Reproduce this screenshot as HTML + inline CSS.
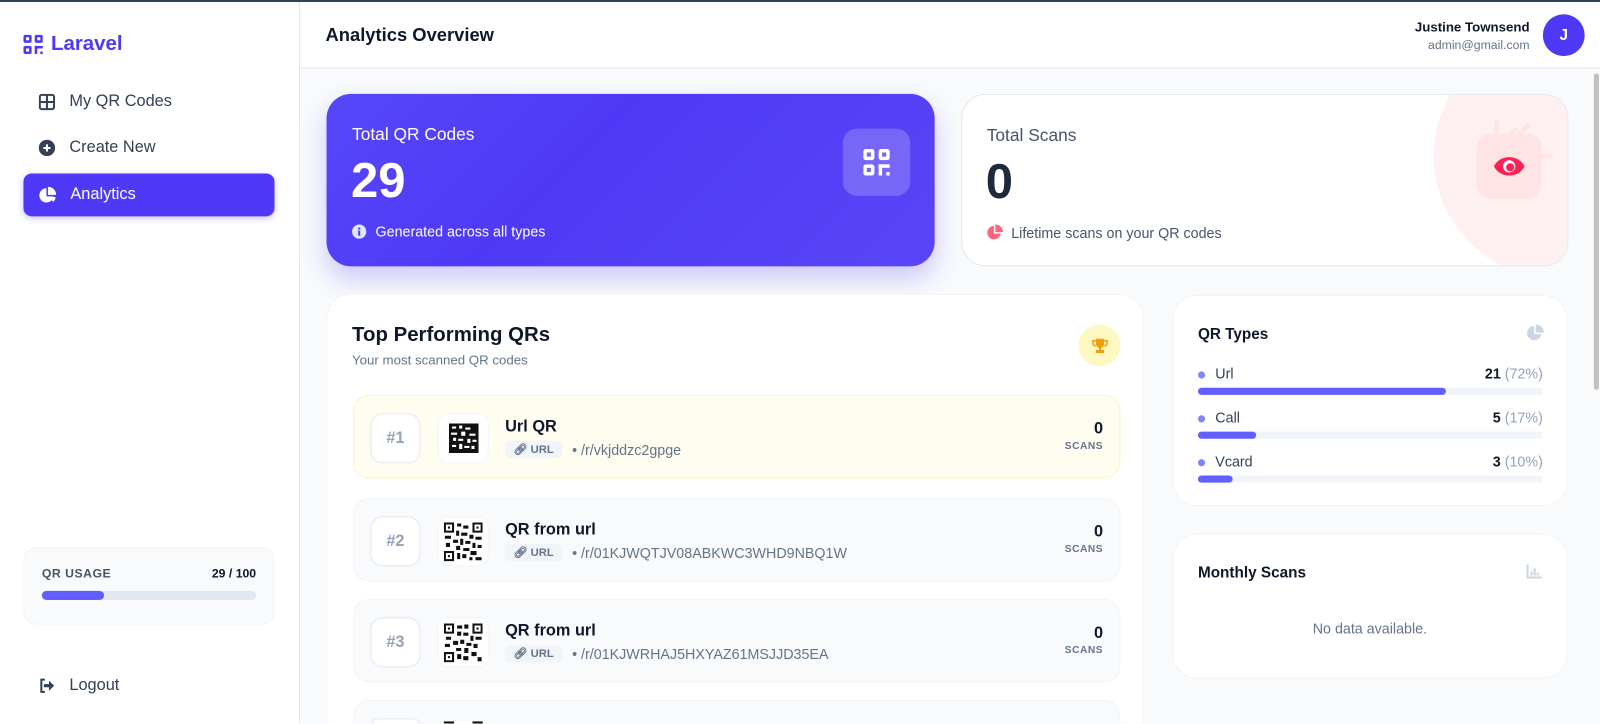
<!DOCTYPE html>
<html style="width:1600px;height:724px;overflow:hidden"><head><meta charset="utf-8"><style>
*{box-sizing:border-box;margin:0;padding:0}
body{width:1600px;height:724px;overflow:hidden;font-family:"Liberation Sans",sans-serif;background:#f8fafc;color:#0f172a;position:relative}
#w{position:absolute;left:0;top:0;width:1568px;height:709px;overflow:hidden;transform:scale(1.020408);transform-origin:0 0;background:#f8fafc}
.top{position:absolute;left:0;top:0;width:1568px;height:2px;background:#334155}
.side{position:absolute;left:0;top:2px;width:294px;height:707px;background:#fff;border-right:1px solid #e2e8f0}
.logo{position:absolute;left:23px;top:30px;font-size:20px;font-weight:bold;color:#4f39f6;display:flex;align-items:center;gap:8px}
.nav{position:absolute;left:23px;width:246px;height:42px;border-radius:8px;display:flex;align-items:center;padding-left:15px;gap:14px;font-size:16px;color:#334155}
.nav.act{background:#4f39f6;color:#fff;box-shadow:0 2px 6px rgba(79,57,246,.3)}
.usage{position:absolute;left:23px;top:534px;width:246px;height:76px;background:#f8fafc;border:1px solid #f1f5f9;border-radius:12px;padding:18px 17px}
.hdr{position:absolute;left:294px;top:2px;width:1274px;height:65px;background:#fff;border-bottom:1px solid #e2e8f0}
.card{position:absolute;background:#fff;border:1px solid #e2e8f0;border-radius:24px;overflow:hidden}
.row{position:absolute;left:25px;width:752px;height:82px;border-radius:16px;background:#f8fafc;border:1px solid #f1f5f9;overflow:hidden}
.rank{position:absolute;left:16px;top:17px;width:49px;height:49px;border:1px solid #e2e8f0;background:#fff;border-radius:12px;display:flex;align-items:center;justify-content:center;font-weight:bold;color:#94a3b8;font-size:16px}
.qr{position:absolute;left:82px;top:17px;width:50px;height:49px;background:#fff;border-radius:10px;border:1px solid #f1f5f9;display:flex;align-items:center;justify-content:center}
.ttl{position:absolute;left:148px;top:22px;font-weight:bold;font-size:16px}
.meta{position:absolute;left:148px;top:44px;display:flex;align-items:center;gap:10px;font-size:14px;color:#64748b}
.tag{background:#f1f5f9;border-radius:5px;padding:2px 8px;font-size:11px;font-weight:bold;color:#64748b;display:flex;gap:6px;align-items:center}
.sc{position:absolute;right:16px;top:24px;text-align:right;font-weight:bold;font-size:16px}
.sc small{display:block;font-size:10px;color:#64748b;letter-spacing:.5px;margin-top:2px}
.ty{position:absolute;left:24px;width:338px}
.ty .l{display:flex;justify-content:space-between;font-size:14px;color:#334155}
.ty .bar{height:7px;background:#f1f5f9;border-radius:4px;margin-top:6px}
.ty .bar div{height:7px;background:#615fff;border-radius:4px}
.dot{display:inline-block;width:7px;height:7px;border-radius:50%;background:#7c86ff;margin-right:10px;vertical-align:middle}
</style></head><body><div id="w">
<div class="top"></div>
<div class="side">
<div class="logo"><svg width="19" height="19" viewBox="0 0 19 19" fill="#4f39f6"><path d="M0 2a2 2 0 0 1 2-2h4a2 2 0 0 1 2 2v4a2 2 0 0 1-2 2H2a2 2 0 0 1-2-2zM2.5 2.5v3h3v-3zM11 2a2 2 0 0 1 2-2h4a2 2 0 0 1 2 2v4a2 2 0 0 1-2 2h-4a2 2 0 0 1-2-2zM13.5 2.5v3h3v-3zM0 13a2 2 0 0 1 2-2h4a2 2 0 0 1 2 2v4a2 2 0 0 1-2 2H2a2 2 0 0 1-2-2zM2.5 13.5v3h3v-3z" fill-rule="evenodd"/><rect x="11" y="11" width="2.5" height="8"/><rect x="11" y="11" width="8" height="2.5"/><rect x="16.5" y="16.5" width="2.5" height="2.5"/></svg>Laravel</div>
<div class="nav" style="top:77px"><svg width="16" height="16" viewBox="0 0 16 16"><rect x="1" y="1" width="14" height="14" rx="2" fill="none" stroke="#334155" stroke-width="2"/><path d="M8 1v14M1 8h14" stroke="#334155" stroke-width="2"/></svg>My QR Codes</div>
<div class="nav" style="top:122px"><svg width="16" height="16" viewBox="0 0 16 16"><circle cx="8" cy="8" r="8" fill="#334155"/><path d="M8 4.5v7M4.5 8h7" stroke="#fff" stroke-width="2"/></svg>Create New</div>
<div class="nav act" style="top:168px"><svg width="17" height="17" viewBox="0 0 17 17" fill="#fff"><path d="M7.5 1.5A7 7 0 1 0 14.5 9.5H7.5z"/><path d="M9 0a8 8 0 0 1 8 8H9z"/><path d="M10 10h6.5a7 7 0 0 1-2.3 4.8z"/></svg>Analytics</div>
<div class="usage"><div style="display:flex;justify-content:space-between;font-size:12px;font-weight:bold"><span style="color:#475569;letter-spacing:.5px">QR USAGE</span><span>29 / 100</span></div>
<div style="height:9px;background:#e2e8f0;border-radius:5px;margin-top:10px"><div style="width:29%;height:9px;background:#615fff;border-radius:5px"></div></div></div>
<div class="nav" style="top:649px"><svg width="16" height="16" viewBox="0 0 16 16"><path d="M6 2H2.5v12H6" fill="none" stroke="#334155" stroke-width="2"/><path d="M5 6.5h5V3l5 5-5 5V9.5H5z" fill="#334155"/></svg>Logout</div>
</div>
<div class="hdr">
<div style="position:absolute;left:25px;top:22px;font-size:18px;font-weight:bold;color:#0f172a">Analytics Overview</div>
<div style="position:absolute;right:69px;top:17px;text-align:right"><div style="font-size:13px;font-weight:bold">Justine Townsend</div><div style="font-size:12px;color:#64748b;margin-top:3px">admin@gmail.com</div></div>
<div style="position:absolute;left:1218px;top:12px;width:41px;height:41px;border-radius:50%;background:#4f39f6;color:#fff;font-weight:bold;display:flex;align-items:center;justify-content:center;font-size:15px">J</div>
</div>
<div style="position:absolute;left:1562px;top:72px;width:5px;height:310px;background:#c1c1c1;border-radius:3px"></div>
<div class="card" style="left:320px;top:92px;width:596px;height:169px;border:none;background:linear-gradient(135deg,#5647fb,#4f39f6 40%,#5a45f8);box-shadow:0 12px 24px rgba(79,57,246,.25);color:#fff">
<div style="position:absolute;left:25px;top:30px;font-size:17px">Total QR Codes</div>
<div style="position:absolute;left:24px;top:58px;font-size:48px;font-weight:bold">29</div>
<div style="position:absolute;left:25px;top:127px;font-size:14px;display:flex;align-items:center;gap:9px"><svg width="14" height="14"><circle cx="7" cy="7" r="7" fill="#e0e7ff"/><rect x="6" y="6" width="2" height="5" fill="#4f39f6"/><rect x="6" y="3" width="2" height="2" fill="#4f39f6"/></svg>Generated across all types</div>
<div style="position:absolute;left:506px;top:34px;width:66px;height:66px;border-radius:14px;background:rgba(255,255,255,.2);display:flex;align-items:center;justify-content:center"><svg width="26" height="26" viewBox="0 0 19 19" fill="#fff"><path d="M0 2a2 2 0 0 1 2-2h4a2 2 0 0 1 2 2v4a2 2 0 0 1-2 2H2a2 2 0 0 1-2-2zM2.5 2.5v3h3v-3zM11 2a2 2 0 0 1 2-2h4a2 2 0 0 1 2 2v4a2 2 0 0 1-2 2h-4a2 2 0 0 1-2-2zM13.5 2.5v3h3v-3zM0 13a2 2 0 0 1 2-2h4a2 2 0 0 1 2 2v4a2 2 0 0 1-2 2H2a2 2 0 0 1-2-2zM2.5 13.5v3h3v-3z" fill-rule="evenodd"/><rect x="11" y="11" width="2.5" height="8"/><rect x="11" y="11" width="8" height="2.5"/><rect x="16.5" y="16.5" width="2.5" height="2.5"/></svg></div>
</div>
<div class="card" style="left:942px;top:92px;width:595px;height:169px">
<div style="position:absolute;left:462px;top:-60px;width:240px;height:240px;border-radius:50%;background:#fff1f2"></div>
<svg style="position:absolute;left:500px;top:20px" width="80" height="90" viewBox="0 0 80 90"><rect x="4" y="18" width="64" height="64" rx="14" fill="#ffe4e6"/><path d="M24 18V6M38 18l4-4M44 22l10-12M68 40h8" stroke="#ffe4e6" stroke-width="5" stroke-linecap="round"/><path d="M21 50C27 38 45 38 51 50 45 62 27 62 21 50z" fill="#ff2056"/><circle cx="36" cy="50" r="6" fill="#fff"/><circle cx="37" cy="51" r="4" fill="#ff2056"/></svg>
<div style="position:absolute;left:24px;top:30px;font-size:17px;color:#475569">Total Scans</div>
<div style="position:absolute;left:23px;top:58px;font-size:48px;font-weight:bold;color:#1e293b">0</div>
<div style="position:absolute;left:24px;top:127px;font-size:14px;color:#475569;display:flex;align-items:center;gap:8px"><svg width="16" height="16" viewBox="0 0 17 17" fill="#ff637e"><path d="M7.5 1.5A7 7 0 1 0 14.5 9.5H7.5z"/><path d="M9 0a8 8 0 0 1 8 8H9z"/></svg>Lifetime scans on your QR codes</div>
</div>
<div class="card" style="left:320px;top:288px;width:801px;height:421px;border-color:#f1f5f9;border-bottom:none;border-radius:24px 24px 0 0">
<div style="position:absolute;left:24px;top:28px;font-size:20px;font-weight:bold">Top Performing QRs</div>
<div style="position:absolute;left:24px;top:56px;font-size:13px;color:#64748b">Your most scanned QR codes</div>
<div style="position:absolute;left:736px;top:29px;width:41px;height:41px;border-radius:50%;background:#fef9c3;display:flex;align-items:center;justify-content:center"><svg width="16" height="16" viewBox="0 0 16 16" fill="#f59e0b"><path d="M4 1h8v5a4 4 0 0 1-8 0z"/><path d="M4 3H1v2a3 3 0 0 0 3 3M12 3h3v2a3 3 0 0 1-3 3" fill="none" stroke="#f59e0b" stroke-width="1.5"/><rect x="7" y="9" width="2" height="3"/><rect x="4" y="12" width="8" height="3"/></svg></div>
<div class="row" style="top:98px;background:#fffdf0;border-color:#fef3c6"><div class="rank">#1</div><div class="qr"><svg width="29" height="29" viewBox="0 0 29 29"><rect width="29" height="29" fill="#111"/><path d="M3 3h4v2H3zM10 2h3v3h-3zM16 4h5v2h-5zM2 9h6v2H2zM12 8h4v4h-4zM20 10h6v2h-6zM4 14h3v3H4zM9 15h5v2H9zM18 15h3v4h-3zM23 16h4v2h-4zM3 21h4v2H3zM10 20h3v5h-3zM15 22h5v2h-5zM22 22h3v3h-3z" fill="#fff"/></svg></div><div class="ttl">Url QR</div><div class="meta"><span class="tag">🔗︎ URL</span>• /r/vkjddzc2gpge</div><div class="sc">0<small>SCANS</small></div></div>
<div class="row" style="top:199px"><div class="rank">#2</div><div class="qr"><svg width="38" height="38" viewBox="0 0 38 38"><rect width="38" height="38" fill="#fff"/><path d="M0 0h10v10H0zM2 2v6h6V2zM28 0h10v10H28zM30 2v6h6V2zM0 28h10v10H0zM2 30v6h6v-6z" fill="#111" fill-rule="evenodd"/><path d="M4 4h2v2H4zM32 4h2v2h-2zM4 32h2v2H4zM13 1h4v3h-4zM19 3h5v3h-5zM12 8h3v5h-3zM17 10h6v3h-6zM1 13h6v3H1zM25 12h4v4h-4zM31 14h6v3h-6zM9 17h5v3H9zM16 16h3v6h-3zM21 18h5v3h-5zM2 20h4v4H2zM28 20h3v5h-3zM33 22h4v3h-4zM12 23h4v4h-4zM19 25h6v3h-6zM13 30h3v6h-3zM18 31h4v4h-4zM26 28h6v4h-6zM25 34h3v3h-3zM31 34h6v3h-6z" fill="#111"/></svg></div><div class="ttl">QR from url</div><div class="meta"><span class="tag">🔗︎ URL</span>• /r/01KJWQTJV08ABKWC3WHD9NBQ1W</div><div class="sc">0<small>SCANS</small></div></div>
<div class="row" style="top:298px"><div class="rank">#3</div><div class="qr"><svg width="38" height="38" viewBox="0 0 38 38"><rect width="38" height="38" fill="#fff"/><path d="M0 0h10v10H0zM2 2v6h6V2zM28 0h10v10H28zM30 2v6h6V2zM0 28h10v10H0zM2 30v6h6v-6z" fill="#111" fill-rule="evenodd"/><path d="M4 4h2v2H4zM32 4h2v2h-2zM4 32h2v2H4zM13 2h5v3h-5zM20 1h4v4h-4zM13 8h4v4h-4zM19 9h5v3h-5zM2 13h5v3H2zM26 12h3v5h-3zM31 13h6v3h-6zM9 17h5v4H9zM16 16h4v4h-4zM22 19h5v3h-5zM1 20h5v3H1zM29 20h4v4h-4zM12 24h5v3h-5zM20 24h4v5h-4zM13 30h4v5h-4zM19 32h5v4h-5zM27 28h5v4h-5zM33 33h4v4h-4z" fill="#111"/></svg></div><div class="ttl">QR from url</div><div class="meta"><span class="tag">🔗︎ URL</span>• /r/01KJWRHAJ5HXYAZ61MSJJD35EA</div><div class="sc">0<small>SCANS</small></div></div>
<div class="row" style="top:397px;height:24px;border-bottom:none;border-radius:16px 16px 0 0"><div style="position:absolute;left:16px;top:17px;width:49px;height:7px;border:1px solid #e2e8f0;border-bottom:none;background:#fff;border-radius:12px 12px 0 0"></div><div style="position:absolute;left:88px;top:20px;width:38px;height:4px;background:linear-gradient(90deg,#111 10px,#fff 10px,#fff 28px,#111 28px)"></div></div>
</div>
<div class="card" style="left:1149px;top:289px;width:387px;height:207px;border-color:#f1f5f9">
<div style="position:absolute;left:24px;top:29px;font-size:15px;font-weight:bold">QR Types</div>
<svg style="position:absolute;left:346px;top:28px" width="17" height="17" viewBox="0 0 17 17" fill="#cbd5e1"><path d="M7.5 1.5A7 7 0 1 0 14.5 9.5H7.5z"/><path d="M9 0a8 8 0 0 1 8 8H9z"/></svg>
<div class="ty" style="top:68px"><div class="l"><span><span class="dot"></span>Url</span><span><b style="color:#0f172a">21</b> <span style="color:#94a3b8">(72%)</span></span></div><div class="bar"><div style="width:72%"></div></div></div>
<div class="ty" style="top:111px"><div class="l"><span><span class="dot"></span>Call</span><span><b style="color:#0f172a">5</b> <span style="color:#94a3b8">(17%)</span></span></div><div class="bar"><div style="width:17%"></div></div></div>
<div class="ty" style="top:154px"><div class="l"><span><span class="dot"></span>Vcard</span><span><b style="color:#0f172a">3</b> <span style="color:#94a3b8">(10%)</span></span></div><div class="bar"><div style="width:10%"></div></div></div>
</div>
<div class="card" style="left:1149px;top:523px;width:387px;height:142px;border-color:#f1f5f9">
<div style="position:absolute;left:24px;top:29px;font-size:15px;font-weight:bold">Monthly Scans</div>
<svg style="position:absolute;left:346px;top:29px" width="15" height="14" viewBox="0 0 15 14" fill="#cbd5e1"><rect x="0" y="0" width="2" height="14"/><rect x="0" y="12" width="15" height="2"/><rect x="4" y="7" width="2" height="4"/><rect x="7" y="4" width="2" height="7"/><rect x="10" y="8" width="2" height="3"/></svg>
<div style="position:absolute;left:0;width:100%;top:84px;text-align:center;font-size:14px;color:#64748b">No data available.</div>
</div>
</div></body></html>
